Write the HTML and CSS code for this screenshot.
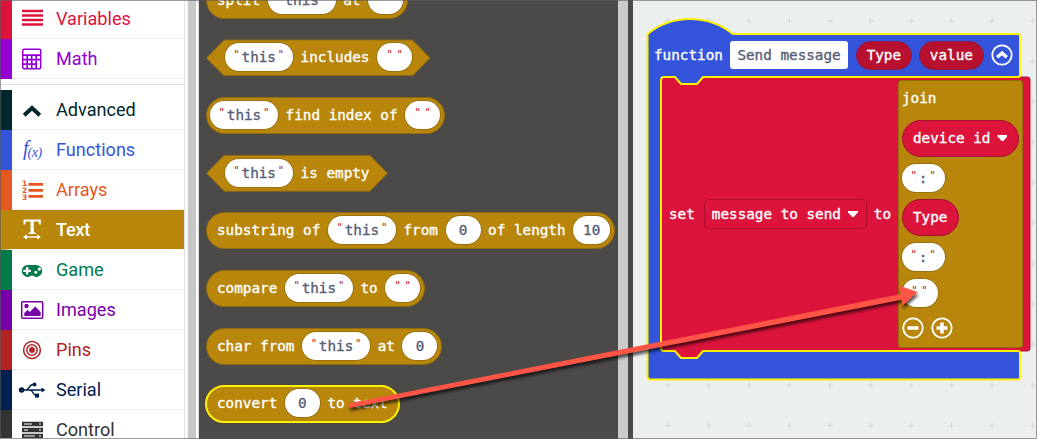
FILE: index.html
```html
<!DOCTYPE html>
<html lang="en">
<head>
<meta charset="utf-8">
<title>Blocks editor</title>
<link rel="stylesheet" href="styles.css">
</head>
<body>
<div class="app">
  <nav class="toolbox">
    <div class="cat variables"><svg class="icon" viewBox="0 0 28 28"><path d="M4 6h21M4 10.500h21M4 15h21M4 19.500h21" stroke="currentColor" stroke-width="2.700"/></svg><span>Variables</span></div>
    <div class="cat math"><svg class="icon" viewBox="0 0 28 28"><rect x="4.700" y="4.200" width="18" height="19.500" rx="1.500" fill="none" stroke="currentColor" stroke-width="1.500"/><path d="M5 10.200h18M5 14.700h18M5 19.200h13M9.200 10v14M13.700 10v14M18.200 10v14" stroke="currentColor" stroke-width="1.700"/></svg><span>Math</span></div>
    <div class="divider"></div>
    <div class="cat advanced"><svg class="icon" viewBox="0 0 28 28"><path d="M6.200 19.200l7.800-7.200 7.800 7.200" fill="none" stroke="currentColor" stroke-width="4"/></svg><span>Advanced</span></div>
    <div class="cat functions"><span class="icon fx">f<small>(x)</small></span><span>Functions</span></div>
    <div class="cat arrays"><svg class="icon" viewBox="0 0 28 28"><path d="M10.500 8.300H25M10.500 14.300H25M10.500 20.300H25" stroke="currentColor" stroke-width="2.800"/><g fill="currentColor" class="digits"><text x="4" y="10">1</text><text x="4" y="17">2</text><text x="4" y="24.300">3</text></g></svg><span>Arrays</span></div>
    <div class="cat text"><svg class="icon" viewBox="0 0 28 28"><path d="M5.500 4.500h17.300v5h-1.600l-.7-3h-4.700v10.700l2 .6v1.200h-7.300v-1.200l2-.6V6.500H7.800l-.7 3H5.500z" fill="currentColor"/><path d="M7 22h14" stroke="currentColor" stroke-width="1.400"/><path d="M5 22l4-2.600v5.200zM23 22l-4-2.600v5.200z" fill="currentColor"/></svg><span>Text</span></div>
    <div class="cat game"><svg class="icon" viewBox="0 0 28 28"><path fill-rule="evenodd" d="M9.500 9h9a6 6 0 1 1-4 10.600h-1A6 6 0 1 1 9.500 9zM8 11v2.700H5.300v2.200H8v2.700h2.300v-2.700H13v-2.200h-2.700V11zM17.800 14.700a1.600 1.600 0 1 0 .1 0zM21.300 11.500a1.600 1.600 0 1 0 .1 0z" fill="currentColor"/></svg><span>Game</span></div>
    <div class="cat images"><svg class="icon" viewBox="0 0 28 28"><rect x="3.700" y="5.700" width="21" height="16.500" rx="1.200" fill="none" stroke="currentColor" stroke-width="1.500"/><circle cx="8.500" cy="10" r="2.200" fill="currentColor"/><path d="M6.300 20v-3l3.200-3 2.300 2 5.500-5.500 5.300 5.500v4z" fill="currentColor"/></svg><span>Images</span></div>
    <div class="cat pins"><svg class="icon" viewBox="0 0 28 28"><g fill="none" stroke="currentColor" stroke-width="1.500"><circle cx="14" cy="14" r="8.400"/><circle cx="14" cy="14" r="5.200"/></g><circle cx="14" cy="14" r="2.900" fill="currentColor"/></svg><span>Pins</span></div>
    <div class="cat serial"><svg class="icon" viewBox="0 0 28 28"><path d="M3 14h21M8 14c3 0 3-5.500 7-5.500h1M12 14c3 0 3 5.500 6 5.500" fill="none" stroke="currentColor" stroke-width="1.500"/><circle cx="3.600" cy="14" r="2.800" fill="currentColor"/><circle cx="16.500" cy="8.500" r="2" fill="currentColor"/><rect x="17" y="17.600" width="4" height="4" fill="currentColor"/><path d="M27.500 14l-4-2.600v5.200z" fill="currentColor"/></svg><span>Serial</span></div>
    <div class="cat control"><svg class="icon" viewBox="0 0 28 28"><path d="M4 8h21M4 14h21M4 20h21" stroke="currentColor" stroke-width="4.600"/><path d="M6 8h8M6 14h4M6 20h11M21 8h2M21 14h2M21 20h2" stroke="#fff" stroke-width="1.100"/></svg><span>Control</span></div>
  </nav>
  <div class="toolbox-scroll"></div>

  <section class="flyout">
    <div class="block">split <span class="str">this</span> at <span class="str empty"></span></div>
    <div class="block hex"><span class="str">this</span> includes <span class="str empty"></span></div>
    <div class="block lead"><span class="str">this</span> find index of <span class="str empty"></span></div>
    <div class="block hex tail"><span class="str">this</span> is empty</div>
    <div class="block">substring of <span class="str">this</span> from <span class="num">0</span> of length <span class="num wide">10</span></div>
    <div class="block">compare <span class="str">this</span> to <span class="str empty"></span></div>
    <div class="block">char from <span class="str">this</span> at <span class="num">0</span></div>
    <div class="block selected">convert <span class="num">0</span> to text</div>
  </section>
  <div class="flyout-scroll"></div>

  <main class="workspace">
    <svg class="grid" width="404" height="439">
      <defs><pattern id="plus" x="14.800" y="0.600" width="40.500" height="40.470" patternUnits="userSpaceOnUse"><path d="M17.250 20.230h6M20.250 17.230v6" stroke="#d5d9da" stroke-width="1"/></pattern></defs>
      <rect width="404" height="439" fill="url(#plus)"/>
    </svg>
    <div class="definition">
      <svg class="shape" viewBox="645 15 390 370">
        <path d="M660 77H1027.500q2.500 0 2.500 2.500V348.500q0 2.500-2.500 2.500H704l-7 8H681l-7-8H660z" fill="#dc143c" stroke="#b01030"/>
        <path d="M647.500 34C672 14 708 14 733 34H1018q2 0 2 2V75q0 2-2 2H703l-6 7H681l-6-7H664q-3 0-3 3V348q0 3 3 3H675l6 7H697l6-7H1018q2 0 2 2V377.500q0 2-2 2H650.500q-3 0-3-3z" fill="#3455db" stroke="#fff200" stroke-width="2"/>
      </svg>
      <div class="header">function <span class="field">Send message</span><span class="arg">Type</span><span class="arg value">value</span>
        <svg class="round" viewBox="0 0 22 22"><circle cx="11" cy="11" r="9.700"/><path d="M6.200 13.200L11 9l4.800 4.200" class="bold"/></svg>
      </div>
      <div class="body">
        <div class="assign">set <span class="dropdown">message to send <i class="caret"></i></span> to</div>
        <div class="join">
          <span class="join-label">join</span>
          <span class="var">device id <i class="caret"></i></span>
          <span class="str colon">:</span>
          <span class="var">Type</span>
          <span class="str colon">:</span>
          <span class="str empty"></span>
          <div class="buttons">
            <svg class="round" viewBox="0 0 22 22"><circle cx="11" cy="11" r="9.700"/><path d="M5.500 11h11" class="bold"/></svg>
            <svg class="round" viewBox="0 0 22 22"><circle cx="11" cy="11" r="9.700"/><path d="M5.500 11h11M11 5.500v11" class="bold"/></svg>
          </div>
        </div>
      </div>
    </div>
  </main>
  <svg class="arrow" viewBox="0 0 1037 439"><path d="M348.500 403.500L901 294l-2.300-8.500 19 6.500-15.400 14-.8-6.300L349.500 408z" fill="#ff5546"/></svg>
  <div class="frame"></div>
</div>
</body>
</html>
```
FILE: styles.css
```css
* { box-sizing: border-box; }
body { margin: 0; }
.app {
  position: relative;
  display: flex;
  width: 1037px;
  height: 439px;
  overflow: hidden;
  background: #fff;
}

/* Category list */
.toolbox {
  width: 185px;
  height: 439px;
  margin-top: -1px;
  overflow: hidden;
  border-right: 1px solid #e4e4e6;
  font: 18.1px Roboto, sans-serif;
}
.cat {
  display: flex;
  align-items: center;
  height: 40px;
  padding: 0 0 1px 6px;
  border-left: 12px solid var(--c);
  background: linear-gradient(#e9ecee, #e9ecee) bottom / 100% 1px no-repeat;
  color: var(--c);
}
.cat .icon { width: 28px; height: 28px; flex: none; margin-right: 10px; }
.divider { height: 6px; margin-bottom: 5px; border-bottom: 1px solid #dcdcde; }
.variables { --c: #dc143c; }
.math { --c: #9400d3; }
.advanced { --c: #00272b; }
.functions { --c: #3455db; }
.arrays { --c: #e65722; }
.text { --c: #b8860b; background: #b8860b; color: #fff; border-bottom: 1px solid #fff; font-weight: 500; letter-spacing: -0.250px; }
.game { --c: #007a4b; }
.images { --c: #7600a8; }
.pins { --c: #b22222; }
.serial { --c: #002050; }
.control { --c: #333; }
.fx { padding-left: 5px; font: italic 20px/25px "Liberation Serif", serif; letter-spacing: -1px; white-space: nowrap; }
.fx small { font-size: 14px; position: relative; top: 2px; letter-spacing: -0.500px; }
.digits { font: bold 7.500px "DejaVu Sans", sans-serif; }
.toolbox-scroll {
  width: 14px;
  background: linear-gradient(90deg, #fafafa 3px, #c7c7c7 3px 11px, #fafafa 11px 13px, #dcdcde 13px);
}

/* Block palette */
.flyout, .workspace {
  font: 14.300px "DejaVu Sans Mono", monospace;
  -webkit-text-stroke: 0.350px currentColor;
  color: #fff;
}
.flyout {
  display: flex;
  flex-direction: column;
  align-items: flex-start;
  gap: 20.700px;
  width: 419px;
  height: 439px;
  padding: 0 7px;
  overflow: hidden;
  background: #4c4949;
}
.flyout .block:first-child { margin-top: -18.300px; }
.block {
  display: flex;
  flex: none;
  align-items: center;
  gap: 7.600px;
  height: 37px;
  padding: 0 3.500px 1px 10px;
  border: 1px solid #8f6b10;
  border-radius: 19px;
  background: #b8860b;
  white-space: nowrap;
}
.lead { padding-left: 3px; }
.hex {
  position: relative;
  z-index: 0;
  padding: 0 18.500px 1px 18.500px;
  border: 0;
  border-radius: 0;
  background: #8f6b10;
  clip-path: polygon(18px 0, calc(100% - 18px) 0, 100% 50%, calc(100% - 18px) 100%, 18px 100%, 0 50%);
}
.hex::before {
  content: "";
  position: absolute;
  z-index: -1;
  inset: 1px;
  background: #b8860b;
  clip-path: polygon(17.500px 0, calc(100% - 17.500px) 0, 100% 50%, calc(100% - 17.500px) 100%, 17.500px 100%, 0 50%);
}
.selected {
  margin: -1px;
  height: 38px;
  padding-right: 10px;
  border: 2px solid #fff200;
}
.str, .num {
  display: flex;
  flex: none;
  align-items: center;
  justify-content: center;
  height: 28px;
  border-radius: 14px;
  background: #fff;
  box-shadow: 0 0 0 0.700px #8f6b10;
  color: #575e75;
}
.str { width: 68px; }
.hex .str:first-child { width: 68.500px; }
.num, .str.empty { width: 35px; }
.num.wide { width: 37px; }
.str::before, .str::after {
  content: '"';
  width: 8px;
  flex: none;
  text-align: center;
  font-size: 10.500px;
  line-height: 12px;
  align-self: flex-start;
  margin-top: 5px;
  color: #b0202c;
  -webkit-text-stroke: 0;
}
.str::before { margin-right: 1px; }
.str::after { margin-left: 1px; }
.flyout-scroll {
  width: 15px;
  background: linear-gradient(90deg, #cbcbcb 10px, #4c4949 10px);
}

/* Workspace canvas */
.workspace { position: relative; width: 404px; background: #ebeff0; }
.grid { position: absolute; inset: 0; }
.definition { position: absolute; left: 12px; top: 15px; width: 390px; height: 370px; }
.shape { position: absolute; inset: 0; width: 390px; height: 370px; }
.header {
  position: relative;
  display: flex;
  align-items: center;
  height: 42px;
  margin: 19px 0 0 9px;
  white-space: nowrap;
}
.field {
  display: flex;
  align-items: center;
  width: 118px;
  height: 28px;
  margin: 0 7.500px 0 7.500px;
  padding-left: 7px;
  border-radius: 3px;
  background: #fff;
  color: #575e75;
}
.arg, .var {
  display: flex;
  align-items: center;
  justify-content: center;
  border: 1px solid #8d1a48;
  border-radius: 19px;
}
.arg { width: 56px; height: 29px; background: #b8102f; }
.value { width: 65px; margin: 0 7px; }
.round { width: 22px; height: 22px; flex: none; fill: none; stroke: #fff; stroke-width: 1.800; }
.round .bold { stroke-width: 3.500; }
.body {
  position: relative;
  display: flex;
  align-items: flex-start;
  height: 268px;
  margin: 4px 0 0 16px;
  padding-left: 8px;
}
.assign { display: flex; align-items: center; width: 229px; height: 30px; margin-top: 119px; white-space: nowrap; }
.dropdown {
  display: flex;
  align-items: center;
  width: 163px;
  height: 30px;
  margin: 0 7px 0 9px;
  padding-left: 7px;
  border: 1px solid #b01030;
  border-radius: 4px;
}
.caret {
  width: 10px;
  height: 6px;
  margin-left: 7px;
  background: #fff;
  clip-path: polygon(0 0, 100% 0, 100% 20%, 58% 100%, 42% 100%, 0 20%);
}
.join {
  display: flex;
  flex-direction: column;
  align-items: flex-start;
  width: 125px;
  height: 268px;
  padding: 0 0 0 2.500px;
  border: 1px solid #936b09;
  border-radius: 3px;
  background: #b8860b;
}
.join-label { height: 38.500px; line-height: 35px; padding-left: 0.500px; }
.var { height: 37px; padding: 0 10.500px; border-color: #a01030; background: #dc143c; white-space: nowrap; }
.join .str { margin: 7px 0; }
.join .colon { width: 43px; }
.join .str.empty { width: 36px; margin-top: 1px; }
.buttons { display: flex; gap: 7px; margin-top: 3.500px; }

/* Overlays */
.arrow { position: absolute; inset: 0; width: 1037px; height: 439px; filter: drop-shadow(1px 3px 1.500px rgba(0, 0, 0, 0.650)); }
.frame {
  position: absolute;
  inset: 0;
  border: 1px solid rgba(90, 90, 90, 0.600);
}
```
